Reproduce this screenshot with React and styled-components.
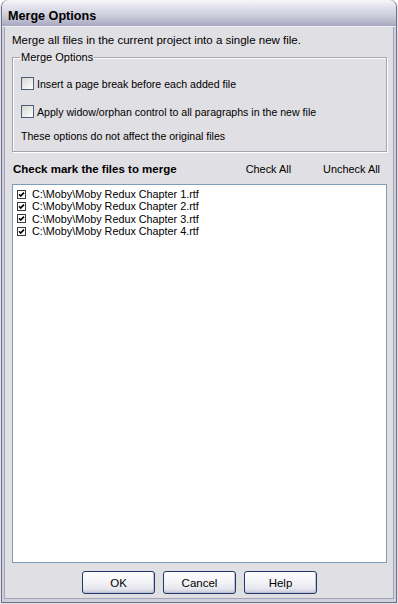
import React from "react";
import styled, { createGlobalStyle } from "styled-components";

const GlobalStyle = createGlobalStyle`
    html, body {
        margin: 0;
        padding: 0;
        background: #ffffff;
    }
    body {
        font-family: "Liberation Sans", Arial, sans-serif;
        font-size: 11.5px;
        color: #000;
    }
`;

const Window = styled.div`
    width: 398px;
    height: 604px;
    box-sizing: border-box;
    display: flex;
    flex-direction: column;
    background: #c9c9d6;
    border: 1px solid #e2e2ea;
    border-top: none;
    border-radius: 7px 7px 0 0;
    overflow: hidden;
`;

const Frame = styled.div`
    flex: 1;
    display: flex;
    flex-direction: column;
    border: 1px solid #6f6f88;
    border-top: none;
    border-radius: 7px 7px 0 0;
    background: #d0d0dc;
    padding: 0 2px 3px;
`;

const TitleBar = styled.div`
    height: 27px;
    box-sizing: border-box;
    margin: 0 -2px;
    display: flex;
    align-items: center;
    padding: 6px 6px 0;
    border-radius: 7px 7px 0 0;
    background: linear-gradient(#f6f6fa 0%, #e4e4ee 25%, #d0d0de 55%, #b6b6cb 85%, #a6a6bf 100%);
    border-bottom: 1px solid #eeeef4;
    font-weight: bold;
    font-size: 12.6px;
`;

const Body = styled.div`
    flex: 1;
    display: flex;
    flex-direction: column;
    background: #e0dfe3;
    padding: 0 6px 4px 7px;
    border-left: 1px solid #a5a5b8;
    border-right: 1px solid #a5a5b8;
    border-bottom: 1px solid #a5a5b8;
`;

const Intro = styled.p`
    margin: 6px 0 4px;
    line-height: 14px;
`;

const Group = styled.fieldset`
    margin: 0;
    padding: 0 8px 8px;
    border: 1px solid #a4a4b0;
    box-shadow: 1px 1px 0 #ffffff, inset 1px 1px 0 #ffffff;
    display: flex;
    flex-direction: column;
    font-size: 10.6px;
`;

const Legend = styled.legend`
    padding: 0 1px;
    margin-left: -1px;
    line-height: 13px;
    font-size: 11px;
`;

const OptionRow = styled.label`
    display: flex;
    align-items: center;
    gap: 3px;
    height: 13px;
    margin-top: ${(p) => p.$top}px;
`;

const XpBox = styled.span`
    width: 11px;
    height: 11px;
    border: 1px solid #4d5c7a;
    background: linear-gradient(135deg, #d4d4ce 0%, #ececea 55%, #ffffff 100%);
    flex: 0 0 auto;
`;

const Note = styled.p`
    margin: 11px 0 0;
    line-height: 14px;
`;

const ListHeader = styled.div`
    display: flex;
    align-items: center;
    margin-top: 10px;
    height: 14px;
    padding-right: 7px;
`;

const HeaderTitle = styled.span`
    flex: 1;
    font-weight: bold;
    padding-left: 1px;
`;

const HeaderLink = styled.span`
    font-size: 10.9px;
    margin-left: ${(p) => p.$gap || 0}px;
`;

const FileList = styled.ul`
    flex: 1;
    margin: 8px 0 0;
    padding: 3px 0 0 4px;
    list-style: none;
    background: #ffffff;
    border: 1px solid #7f9db9;
`;

const FileItem = styled.li`
    display: flex;
    align-items: center;
    gap: 6px;
    height: 12.3px;
    line-height: 12px;
    font-size: 10.8px;
`;

const SmallBox = styled.svg`
    flex: 0 0 auto;
`;

const ButtonRow = styled.div`
    display: flex;
    justify-content: center;
    gap: 8px;
    margin-top: 8px;
`;

const Button = styled.button`
    width: 73px;
    height: 23px;
    border: 1px solid #20386a;
    border-radius: 3px;
    background: linear-gradient(#ffffff 0%, #f4f4f8 45%, #e6e6ee 80%, #c8c8da 100%);
    box-shadow: inset -1px -1px 0 #c0c0d4;
    font-family: "Liberation Sans", Arial, sans-serif;
    font-size: 11.5px;
    color: #000;
    padding: 0;
`;

const files = [
    "C:\\Moby\\Moby Redux Chapter 1.rtf",
    "C:\\Moby\\Moby Redux Chapter 2.rtf",
    "C:\\Moby\\Moby Redux Chapter 3.rtf",
    "C:\\Moby\\Moby Redux Chapter 4.rtf",
];

const CheckedBox = () => (
    <SmallBox width="9" height="9" viewBox="0 0 9 9">
        <rect x="0.5" y="0.5" width="8" height="8" fill="#fff" stroke="#3a3a3a" />
        <path d="M2 4.2 L3.7 6 L7 2.6" fill="none" stroke="#000" strokeWidth="1.6" />
    </SmallBox>
);

const App = () => {
    return (
        <>
            <GlobalStyle />
            <Window>
                <Frame>
                    <TitleBar>Merge Options</TitleBar>
                    <Body>
                        <Intro>Merge all files in the current project into a single new file.</Intro>
                        <Group>
                            <Legend>Merge Options</Legend>
                            <OptionRow $top={13}>
                                <XpBox />
                                Insert a page break before each added file
                            </OptionRow>
                            <OptionRow $top={15}>
                                <XpBox />
                                Apply widow/orphan control to all paragraphs in the new file
                            </OptionRow>
                            <Note>These options do not affect the original files</Note>
                        </Group>
                        <ListHeader>
                            <HeaderTitle>Check mark the files to merge</HeaderTitle>
                            <HeaderLink>Check All</HeaderLink>
                            <HeaderLink $gap={32}>Uncheck All</HeaderLink>
                        </ListHeader>
                        <FileList>
                            {files.map((f) => (
                                <FileItem key={f}>
                                    <CheckedBox />
                                    {f}
                                </FileItem>
                            ))}
                        </FileList>
                        <ButtonRow>
                            <Button>OK</Button>
                            <Button>Cancel</Button>
                            <Button>Help</Button>
                        </ButtonRow>
                    </Body>
                </Frame>
            </Window>
        </>
    );
};

export default App;
